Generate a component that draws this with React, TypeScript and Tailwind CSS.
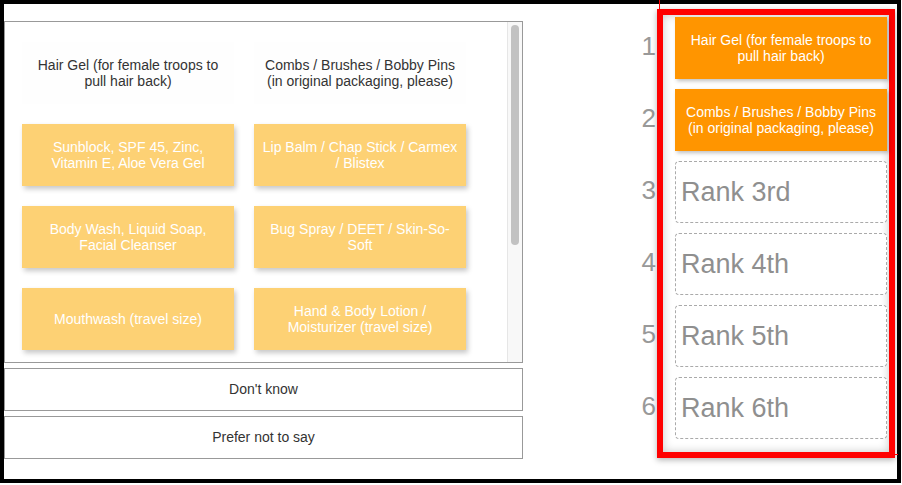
const pool: { label: string; placed?: boolean }[] = [
  { label: "Hair Gel (for female troops to pull hair back)", placed: true },
  { label: "Combs / Brushes / Bobby Pins (in original packaging, please)", placed: true },
  { label: "Sunblock, SPF 45, Zinc, Vitamin E, Aloe Vera Gel" },
  { label: "Lip Balm / Chap Stick / Carmex / Blistex" },
  { label: "Body Wash, Liquid Soap, Facial Cleanser" },
  { label: "Bug Spray / DEET / Skin-So-Soft" },
  { label: "Mouthwash (travel size)" },
  { label: "Hand & Body Lotion / Moisturizer (travel size)" },
];

const ranked = [
  "Hair Gel (for female troops to pull hair back)",
  "Combs / Brushes / Bobby Pins (in original packaging, please)",
];

const slots = ["Rank 3rd", "Rank 4th", "Rank 5th", "Rank 6th"];

function PoolCard({ label, placed }: { label: string; placed?: boolean }) {
  if (placed) {
    // item already dragged into the ranking: leaves a ghost behind
    return (
      <div className="flex items-center justify-center bg-[#fefefe] px-[8px] text-center text-[14px] leading-[16px] text-[#333]">
        {label}
      </div>
    );
  }
  return (
    <div className="flex items-center justify-center bg-[#fdd174] px-[8px] text-center text-[14px] leading-[16px] text-white shadow-[2px_3px_5px_rgba(0,0,0,0.22)]">
      {label}
    </div>
  );
}

function OptOut({ label }: { label: string }) {
  return (
    <div className="flex h-[43px] items-center justify-center border border-[#999] text-[14px] text-[#333]">
      {label}
    </div>
  );
}

export default function App() {
  return (
    <div className="relative h-[485px] w-[902px] bg-white font-['Liberation_Sans',Arial,sans-serif]">
      <div className="flex h-[483px] w-[901px] border-4 border-black">
        {/* left: item pool */}
        <div className="w-[519px] pt-[17px]">
          <div className="flex h-[342px] border border-[#999]">
            <div className="flex-1 overflow-hidden">
              <div className="grid auto-rows-[62px] grid-cols-[212px_212px] gap-x-[20px] gap-y-[20px] pl-[17px] pt-[20px]">
                {pool.map((p) => (
                  <PoolCard key={p.label} label={p.label} placed={p.placed} />
                ))}
              </div>
            </div>
            <div className="w-[15px] border-l border-[#e6e6e6] bg-[#f8f8f8] pt-[3px]">
              <div className="mx-auto h-[220px] w-[8px] rounded-full bg-[#c2c2c2]" />
            </div>
          </div>
          <div className="mt-[5px]">
            <OptOut label="Don't know" />
          </div>
          <div className="mt-[5px]">
            <OptOut label="Prefer not to say" />
          </div>
        </div>

        {/* rank numbers */}
        <div className="flex flex-1 flex-col items-end pr-[1px] pt-[13px]">
          {[1, 2, 3, 4, 5, 6].map((n) => (
            <div
              key={n}
              className="mb-[10px] flex h-[62px] items-center pb-[4px] text-[26px] leading-none text-[#999]"
            >
              {n}
            </div>
          ))}
        </div>

        {/* right: ranking drop zone */}
        <div className="mr-[2px] mt-[5px] h-[449px] w-[238px] border-[6px] border-[#ff0000] pb-[13px] pl-[12px] pr-[2px] pt-[2px] shadow-[0_2px_6px_rgba(0,0,0,0.3),inset_0_0_10px_rgba(0,0,0,0.22)]">
          <div className="flex flex-col gap-[10px]">
            {ranked.map((r) => (
              <div
                key={r}
                className="flex h-[62px] items-center justify-center bg-[#ff9500] px-[8px] text-center text-[14px] leading-[16px] text-white shadow-[2px_2px_4px_rgba(0,0,0,0.25)]"
              >
                {r}
              </div>
            ))}
            {slots.map((s) => (
              <div
                key={s}
                className="flex h-[62px] items-center rounded-[4px] border border-dashed border-[#aaa] bg-white pl-[5px] text-[27px] text-[#8f8f8f]"
              >
                {s}
              </div>
            ))}
          </div>
        </div>
      </div>

      {/* stray annotation strokes */}
      <div className="absolute left-[659px] top-0 h-[10px] w-px bg-[#ff0000]" />
      <div className="absolute left-[894px] top-[454px] h-px w-[4px] bg-[#ff0000]" />
    </div>
  );
}
